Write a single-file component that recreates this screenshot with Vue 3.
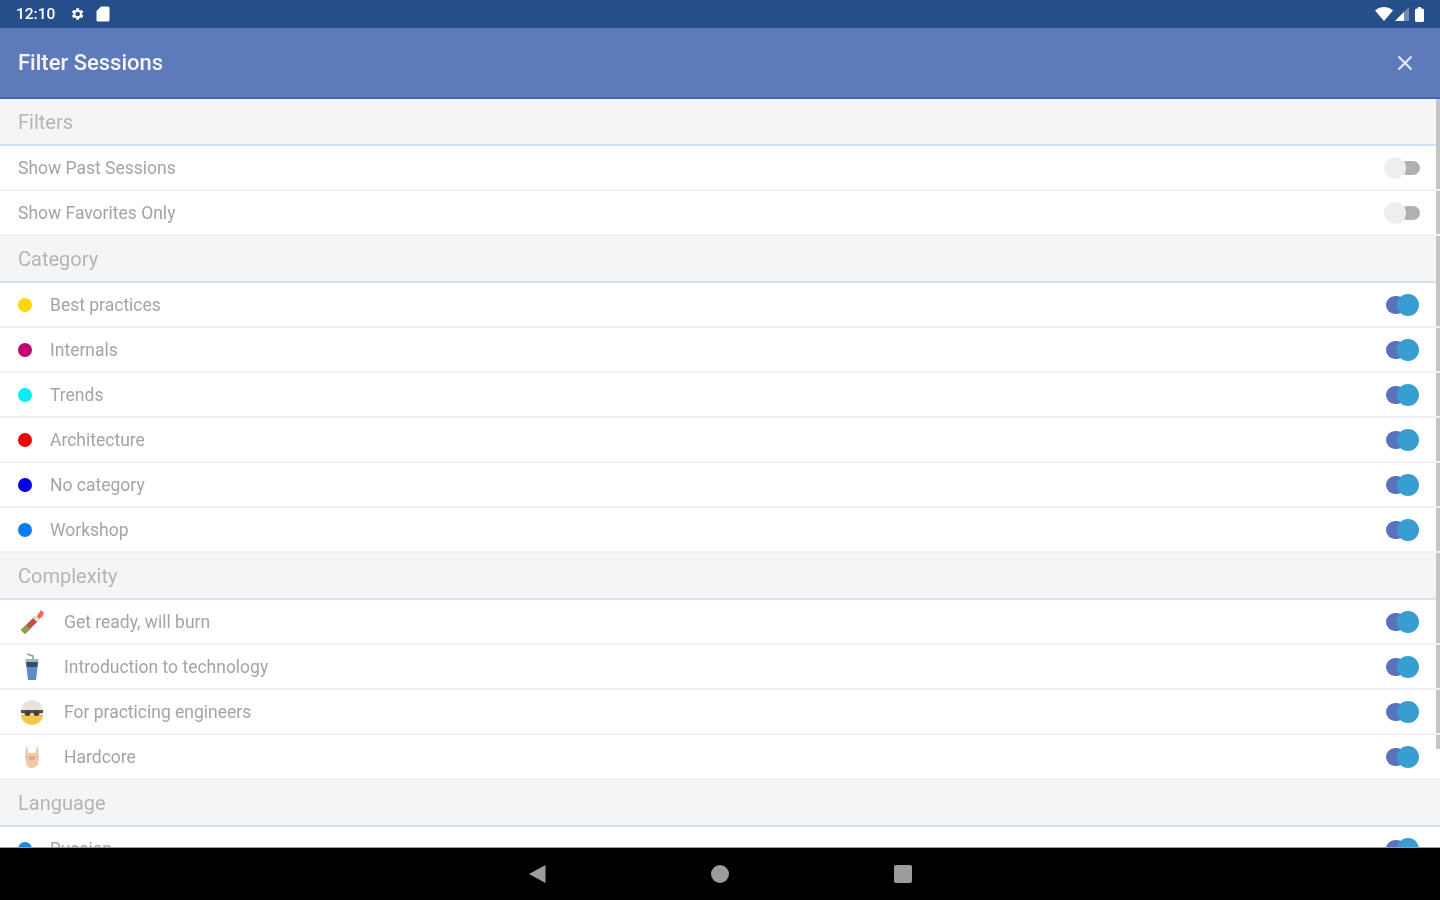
<template>
  <div class="screen">
    <!-- status bar -->
    <div class="status-bar">
      <span class="clock">12:10</span>
      <svg class="st-icon" width="16" height="16" viewBox="0 0 24 24"><path fill="#fff" d="M19.4 13a7.5 7.5 0 0 0 0-2l2.1-1.6-2-3.5-2.5 1a7.5 7.5 0 0 0-1.7-1L15 3.2h-4l-.4 2.7a7.5 7.5 0 0 0-1.7 1l-2.5-1-2 3.5L6.500 11a7.500 7.500 0 0 0 0 2l-2.100 1.600 2 3.500 2.500-1a7.500 7.500 0 0 0 1.700 1l.4 2.700h4l.4-2.700a7.500 7.500 0 0 0 1.700-1l2.500 1 2-3.500zM13 15.500a3.500 3.500 0 1 1 0-7 3.500 3.500 0 0 1 0 7z"/></svg>
      <svg class="st-icon sd" width="14" height="16" viewBox="0 0 14 16"><path fill="#fff" d="M5 0.500h7a1.500 1.500 0 0 1 1.500 1.500v12a1.500 1.500 0 0 1-1.500 1.500H2A1.500 1.500 0 0 1 .5 14V5z"/></svg>
      <span class="grow"></span>
      <svg width="18" height="14" viewBox="0 0 18 14"><path fill="#fff" d="M0 3.500C2.500 1.300 5.500 0 9 0s6.500 1.300 9 3.500L9 14z"/></svg>
      <svg class="signal" width="14" height="14" viewBox="0 0 14 14"><path fill="#fff" fill-opacity=".35" d="M14 0v14H0z"/><path fill="#fff" d="M9 5v9H0z"/></svg>
      <svg class="battery" width="9" height="15" viewBox="0 0 9 15"><path fill="#fff" d="M3 0h3v1.500h1.500A1.500 1.500 0 0 1 9 3v10.500A1.500 1.500 0 0 1 7.500 15h-6A1.500 1.500 0 0 1 0 13.500V3a1.500 1.500 0 0 1 1.500-1.500H3z"/></svg>
    </div>

    <!-- toolbar -->
    <div class="toolbar">
      <span class="title">Filter Sessions</span>
      <svg width="16" height="16" viewBox="0 0 16 16"><path d="M1.500 1.500l13 13M14.500 1.500l-13 13" stroke="#e4eaf6" stroke-width="2.200" fill="none"/></svg>
    </div>

    <div class="content">
      <div class="scrollbar"></div>
      <section v-for="sec in sections" :key="sec.title">
        <div class="sec-head">{{ sec.title }}</div>
        <div v-for="row in sec.rows" :key="row.label" class="row">
          <span v-if="row.color" class="dot" :style="{ background: row.color }"></span>

          <svg v-if="row.icon === 'cracker'" class="emoji" viewBox="0 0 28 28">
            <path d="M3 22 L17 8 L21 12 L7 26 Z" fill="#b5543f"/>
            <path d="M3 22 L8 17 L12 21 L7 26 Z" fill="#8f9a4a"/>
            <path d="M15 10 L18 7 L22 11 L19 14 Z" fill="#e8e2d8"/>
            <path d="M19 8 L23 2 L26 5 L24 9 L21 11 Z" fill="#ef6a50"/>
          </svg>
          <svg v-else-if="row.icon === 'cup'" class="emoji" viewBox="0 0 28 28">
            <path d="M9 1 L15 3 L15 7" stroke="#8d99a3" stroke-width="1.500" fill="none"/>
            <rect x="7.500" y="6" width="13" height="3" fill="#aab4bc"/>
            <path d="M8 9 H20 L19.500 14 H8.500 Z" fill="#31506b"/>
            <path d="M8.500 14 H19.500 L18 27 H10 Z" fill="#5d8bcd"/>
          </svg>
          <svg v-else-if="row.icon === 'shades'" class="emoji" viewBox="0 0 28 28">
            <ellipse cx="14" cy="14" rx="11" ry="12" fill="#e8e4dc"/>
            <path d="M3 17 H25 A11 10 0 0 1 3 17 Z" fill="#f2c84b"/>
            <rect x="3" y="12" width="22" height="3" fill="#55524a"/>
            <circle cx="9.500" cy="15" r="3" fill="#45423a"/>
            <circle cx="18.500" cy="15" r="3" fill="#45423a"/>
          </svg>
          <svg v-else-if="row.icon === 'rock'" class="emoji" viewBox="0 0 28 28">
            <path d="M8 2 L11 10 H17 L20 2 L21 14 L20 22 Q14 28 9 23 L7 14 Z" fill="#f2c9a8"/>
            <path d="M11 13 H17 V17 H11 Z" fill="#e6ab84"/>
          </svg>

          <span class="label">{{ row.label }}</span>
          <span class="switch" :class="{ on: row.on }"><i class="track"></i><i class="thumb"></i></span>
        </div>
      </section>
    </div>

    <!-- navigation bar -->
    <div class="nav-bar">
      <svg width="18" height="20" viewBox="0 0 18 20"><path fill="#9c9c9c" d="M17.500 1v18L1 10z"/></svg>
      <span class="nav-circle"></span>
      <span class="nav-square"></span>
    </div>
  </div>
</template>

<script setup>
const sections = [
  {
    title: 'Filters',
    rows: [
      { label: 'Show Past Sessions', on: false },
      { label: 'Show Favorites Only', on: false }
    ]
  },
  {
    title: 'Category',
    rows: [
      { label: 'Best practices', color: '#ffd600', on: true },
      { label: 'Internals', color: '#c2006d', on: true },
      { label: 'Trends', color: '#00f0f5', on: true },
      { label: 'Architecture', color: '#f50000', on: true },
      { label: 'No category', color: '#0000e6', on: true },
      { label: 'Workshop', color: '#0a7cf0', on: true }
    ]
  },
  {
    title: 'Complexity',
    rows: [
      { label: 'Get ready, will burn', icon: 'cracker', on: true },
      { label: 'Introduction to technology', icon: 'cup', on: true },
      { label: 'For practicing engineers', icon: 'shades', on: true },
      { label: 'Hardcore', icon: 'rock', on: true }
    ]
  },
  {
    title: 'Language',
    rows: [{ label: 'Russian', color: '#1e88e5', on: true }]
  }
]
</script>

<style scoped>
.screen {
  width: 1440px;
  height: 900px;
  display: flex;
  flex-direction: column;
  overflow: hidden;
  background: #fff;
  font-family: Roboto, "Liberation Sans", sans-serif;
  filter: blur(0.6px);
}
.status-bar {
  height: 28px;
  flex: none;
  display: flex;
  align-items: center;
  padding: 0 16px;
  background: #264e8b;
  color: #fff;
}
.clock {
  font-size: 15.500px;
  font-weight: 500;
  margin-right: 14px;
}
.st-icon {
  margin-right: 11px;
}
.sd {
  margin-right: 0;
}
.grow {
  flex: 1;
}
.signal {
  margin-left: 2px;
}
.battery {
  margin-left: 6px;
}
.toolbar {
  height: 71px;
  flex: none;
  display: flex;
  align-items: center;
  justify-content: space-between;
  padding: 0 27px 0 18px;
  box-sizing: border-box;
  background: #5d7aba;
  border-bottom: 2px solid #3f67ae;
}
.title {
  color: #f4f6fb;
  font-size: 22px;
  font-weight: 500;
}
.content {
  flex: 1;
  min-height: 0;
  overflow: hidden;
  position: relative;
}
.scrollbar {
  position: absolute;
  top: 0;
  right: 0;
  width: 4px;
  height: 650px;
  background: #c4c4c4;
}
.sec-head {
  height: 47px;
  box-sizing: border-box;
  display: flex;
  align-items: center;
  padding-left: 18px;
  background: #f5f5f5;
  border-bottom: 2px solid #d3e2f2;
  color: #b4b4b4;
  font-size: 20px;
}
.row {
  height: 45px;
  box-sizing: border-box;
  display: flex;
  align-items: center;
  padding: 0 18px;
  border-bottom: 2px solid #f1f1f1;
  position: relative;
}
.dot {
  width: 14px;
  height: 14px;
  border-radius: 50%;
  margin-right: 18px;
  flex: none;
}
.emoji {
  width: 28px;
  height: 28px;
  margin-right: 18px;
  flex: none;
}
.label {
  color: #a4a4a4;
  font-size: 17.500px;
}
.switch {
  position: absolute;
  right: 20px;
  top: 10px;
  width: 48px;
  height: 24px;
}
.track {
  position: absolute;
  right: 0;
  top: 5px;
  width: 20px;
  height: 14px;
  border-radius: 7px;
  background: #b0b0b0;
}
.thumb {
  position: absolute;
  right: 14px;
  top: 1px;
  width: 22px;
  height: 22px;
  border-radius: 50%;
  background: #eeeeee;
}
.switch.on .track {
  right: 14px;
  top: 3px;
  width: 20px;
  height: 18px;
  border-radius: 9px;
  background: #5a72bb;
}
.switch.on .thumb {
  right: 1px;
  background: #389dd0;
}
.nav-bar {
  height: 53px;
  flex: none;
  display: flex;
  align-items: center;
  justify-content: center;
  gap: 165px;
  background: #000;
  border-top: 1px solid #9a9a9a;
  box-sizing: border-box;
}
.nav-circle {
  width: 18px;
  height: 18px;
  border-radius: 50%;
  background: #9c9c9c;
}
.nav-square {
  width: 18px;
  height: 18px;
  border-radius: 2px;
  background: #9c9c9c;
}
</style>
